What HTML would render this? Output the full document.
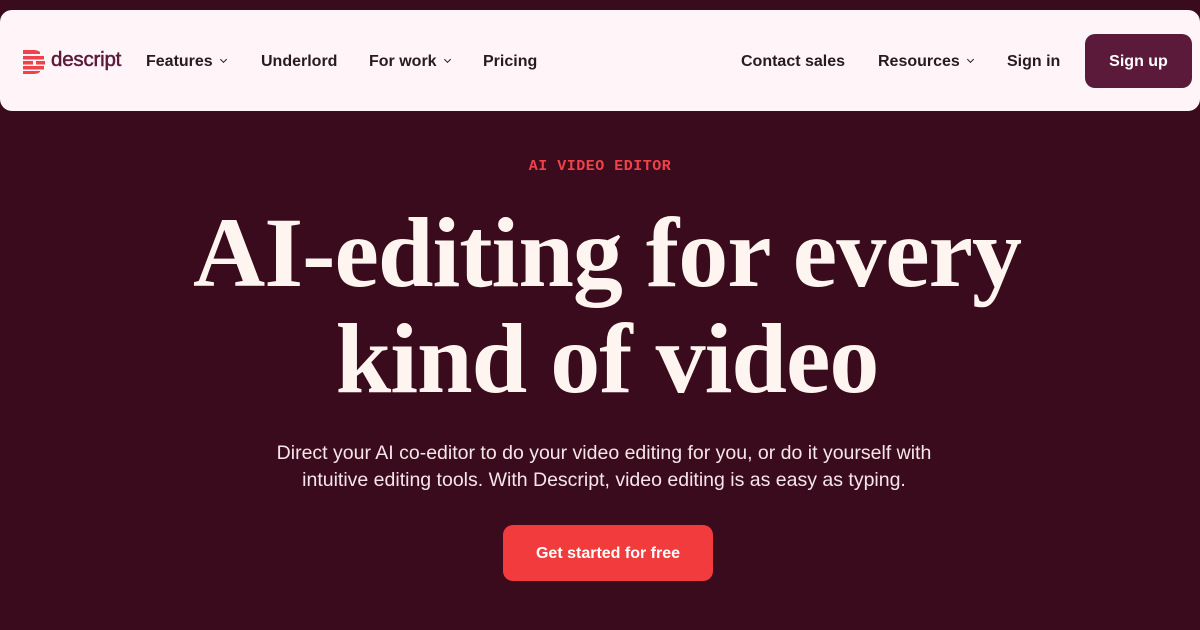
<!DOCTYPE html>
<html><head><meta charset="utf-8"><style>
*{margin:0;padding:0;box-sizing:border-box}
body{width:1200px;height:630px;background:#3a0b1c;font-family:"Liberation Sans",sans-serif;overflow:hidden;position:relative}
.nav{position:absolute;left:0;top:10px;width:1200px;height:101px;background:#fff5f8;border-radius:12px}
.nav a{position:absolute;top:42px;font-size:16px;font-weight:bold;color:#2a1a1f;text-decoration:none;line-height:20px}
.chev{display:inline-block;width:5px;height:5px;border-right:1.5px solid #2a1a1f;border-bottom:1.5px solid #2a1a1f;transform:rotate(45deg);margin-left:8px;position:relative;top:-4px}
.logo{position:absolute;left:23px;top:40px}
.logotxt{position:absolute;left:51px;top:38px;font-size:20.5px;color:#5c1a3a;letter-spacing:-0.2px;-webkit-text-stroke:0.5px #5c1a3a}
.btn{position:absolute;left:1085px;top:24px;width:107px;height:54px;background:#5c1a3a;border-radius:10px;color:#fff;font-weight:bold;font-size:16px;text-align:center;line-height:56px}
.eyebrow{position:absolute;top:158px;width:100%;text-align:center;font-family:"Liberation Mono",monospace;color:#f0424a;font-size:15px;font-weight:bold;letter-spacing:0.5px}
h1{position:absolute;top:200px;width:100%;text-align:center;font-family:"Liberation Serif",serif;font-weight:bold;font-size:100px;line-height:106px;color:#fff5f0;letter-spacing:-1px;padding-left:14px}
p{position:absolute;top:440px;width:100%;text-align:center;color:#f6e6ea;font-size:19.5px;line-height:27px;padding-left:8px}
.cta{position:absolute;left:503px;top:525px;width:210px;height:56px;background:#f23b3d;border-radius:10px;color:#fff;font-weight:bold;font-size:16px;text-align:center;line-height:58px}
</style></head><body>
<div class="nav">
<svg class="logo" width="22" height="24" viewBox="0 0 22 24"><g fill="#f0424a"><path d="M0 0h11a11 11 0 0 1 6 2v2H0z"/><rect x="0" y="6" width="21" height="3.5"/><rect x="0" y="11" width="10" height="3.5"/><rect x="13" y="11" width="9" height="3.5"/><rect x="0" y="16" width="21" height="3.5"/><path d="M0 21h17v1A11 11 0 0 1 11 24H0z"/></g></svg>
<div class="logotxt">descript</div>
<a style="left:146px">Features<span class="chev"></span></a>
<a style="left:261px">Underlord</a>
<a style="left:369px">For work<span class="chev"></span></a>
<a style="left:483px">Pricing</a>
<a style="left:741px">Contact sales</a>
<a style="left:878px">Resources<span class="chev"></span></a>
<a style="left:1007px">Sign in</a>
<div class="btn">Sign up</div>
</div>
<div class="eyebrow">AI VIDEO EDITOR</div>
<h1>AI-editing for every<br>kind of video</h1>
<p>Direct your AI co-editor to do your video editing for you, or do it yourself with<br>intuitive editing tools. With Descript, video editing is as easy as typing.</p>
<div class="cta">Get started for free</div>
</body></html>
